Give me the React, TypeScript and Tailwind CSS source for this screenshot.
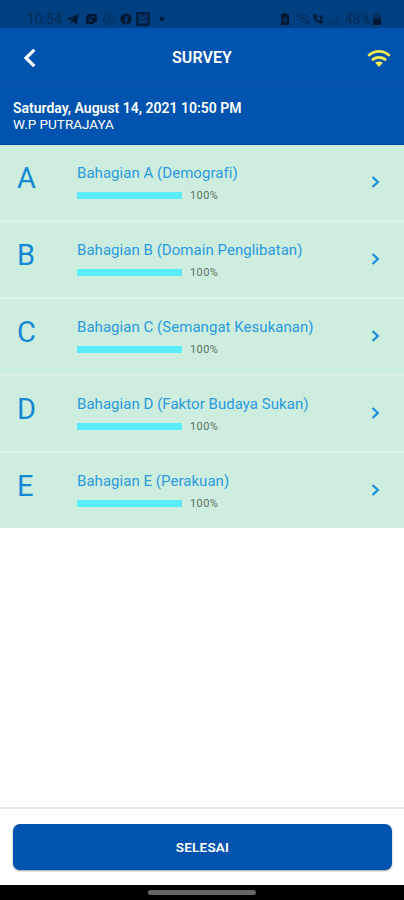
const sections = [
  { letter: 'A', title: 'Bahagian A (Demografi)', progress: 100 },
  { letter: 'B', title: 'Bahagian B (Domain Penglibatan)', progress: 100 },
  { letter: 'C', title: 'Bahagian C (Semangat Kesukanan)', progress: 100 },
  { letter: 'D', title: 'Bahagian D (Faktor Budaya Sukan)', progress: 100 },
  { letter: 'E', title: 'Bahagian E (Perakuan)', progress: 100 },
];

function StatusBar() {
  return (
    <div className="flex h-7 shrink-0 items-center bg-[#003f80] pt-[9px] pr-[23px] pl-[27px] text-[#062c58]">
      <span className="w-[39px] text-[14px] leading-4">10:54</span>
      {/* Notification icons */}
      <svg className="h-3 w-[13px] text-[#021733]" viewBox="0 0 13 12" fill="currentColor">
        <path d="M0.5 5.7 12.5 1 10.6 11.2 7.2 8.7 5.3 10.5 4.7 7.5 9.6 3.5 3.3 6.9Z" />
      </svg>
      <svg className="ml-[6px] h-3 w-3 text-[#021733]" viewBox="0 0 12 12" fill="currentColor">
        <path fillRule="evenodd" d="M2 1h10v8H9.500l-1 2H1V3h1V1Zm2 2.500v1h6v-1H4Zm-1 5h4V7L5.500 6 3 8.500Z" />
      </svg>
      <svg className="ml-[6px] h-3 w-3" viewBox="0 0 12 12" fill="none" stroke="currentColor">
        <circle cx="6" cy="6" r="5.2" />
        <path d="M7.800 4C6.800 3 4.500 3.200 4.500 4.700S7.700 5.700 7.700 7.300 5.200 9 4.200 7.800" />
      </svg>
      <svg className="ml-[5px] h-3 w-3 text-[#021733]" viewBox="0 0 12 12">
        <circle cx="6" cy="6" r="5.600" fill="currentColor" />
        <path d="M6.200 11.600V5.200c0-1.500.8-2 2.300-1.700M4.500 6.600h3.600" fill="none" stroke="#003f80" strokeWidth="1.400" />
      </svg>
      <svg className="ml-[4px] h-[14px] w-[14px] text-[#021733]" viewBox="0 0 14 14">
        <path d="M1 1h12v12H1Z" fill="#042a5a" stroke="currentColor" strokeWidth="1.400" />
        <path d="M4 11V8l3 2 3-2v3M4 2v3l3 1 3-2V2" fill="none" stroke="#003f80" strokeWidth="1.200" />
      </svg>
      <span className="ml-[10px] h-1 w-1 rounded-full bg-[#021733]" />

      {/* System icons */}
      <div className="ml-auto flex items-center">
        <svg className="h-3 w-2 text-[#021733]" viewBox="0 0 8 12">
          <path d="M2.500 0h3v1H8v11H0V1h2.500Z" fill="currentColor" />
          <path d="M2 7.500 4 4l2 3.500ZM4 9v1" fill="none" stroke="#003f80" strokeWidth="0.800" />
        </svg>
        <svg className="ml-[7px] h-3 w-[14px]" viewBox="0 0 14 12" fill="none" stroke="currentColor">
          <path d="M1 4c3.500-3.300 8-3.300 11.500 0M3 6.500c2.300-2 5-2 7.300 0M5 8.800c1.200-.9 2.300-.9 3.400 0M10.500 7v4M12.800 7v4" strokeWidth="1.300" />
        </svg>
        <svg className="ml-[2px] h-3 w-[13px] text-[#021733]" viewBox="0 0 14 12" fill="none" stroke="currentColor">
          <path d="M1.500 1.500c0 5 4 9 9.500 9L12 8 9.500 7 8 8.300C6 7.500 5 6.300 4.500 4.500L5.500 3 4 1Z" fill="currentColor" strokeWidth="0.600" />
          <path d="M12.500 1.500 9 5 7.500 3.500M9 2v3h3" strokeWidth="1.100" />
        </svg>
        <svg className="ml-[2px] h-3 w-3 opacity-50" viewBox="0 0 12 12" fill="currentColor">
          <path d="M0 9h1.500v3H0ZM3 7h1.500v5H3ZM6 5h1.500v7H6ZM9 3h1.500v9H9Z" />
        </svg>
        <span className="ml-[6px] text-[14px] leading-4">48%</span>
        <svg className="ml-[2px] h-3 w-2" viewBox="0 0 8 12">
          <path d="M2.500 0h3v1H8v11H0V1h2.500Z" fill="#043063" />
          <path d="M0 5.500h8V12H0Z" fill="#021733" />
        </svg>
      </div>
    </div>
  );
}

function Header() {
  return (
    <header className="grid h-[60px] shrink-0 grid-cols-[1fr_auto_1fr] items-center border-b border-[#0a4fa9] bg-[#0053ae] px-[13px] text-white">
      <svg className="ml-[10px] h-5 w-[14px]" viewBox="0 0 14 20" fill="none" stroke="currentColor" strokeWidth="3.200">
        <path d="M11.300 1.800 3 10l8.300 8.200" />
      </svg>
      <h1 className="text-[16px] leading-5 font-semibold tracking-[0.1px]">SURVEY</h1>
      <svg className="h-[18px] w-6 justify-self-end" viewBox="0 0 24 18" fill="none" stroke="#f5ec52" strokeWidth="2.700">
        <path d="M1.300 6.800c6.100-6 15.300-6 21.400 0M5 11.200c4-3.900 10-3.900 14 0" />
        <path d="M8.200 13.700c2.300-1.700 5.300-1.700 7.600 0L12 18Z" fill="#f5ec52" stroke="none" />
      </svg>
    </header>
  );
}

function SectionRow({ letter, title, progress }: { letter: string; title: string; progress: number }) {
  return (
    <li className="flex h-[77px] border-b-2 border-[#daf2e8] bg-[#cdedde] pr-[23px] pl-[17px] last:h-[75px] last:border-b-0">
      <span className="w-[60px] pt-[17px] text-[29px] leading-8 text-[#1689d6]">{letter}</span>
      <div className="flex-1 pt-[18px]">
        <p className="text-[15px] leading-5 tracking-[0.04px] whitespace-nowrap text-[#2b9ade]">{title}</p>
        <div className="mt-[5px] flex items-center">
          <div className="h-[7px] w-[105px]">
            <div className="h-full rounded-[1px] bg-[#5cebfa]" style={{ width: `${progress}%` }} />
          </div>
          <span className="ml-2 text-[11px] leading-[15px] tracking-[0.4px] text-[#5c7068]">{progress}%</span>
        </div>
      </div>
      <svg className="mt-[31px] h-3 w-[10px]" viewBox="0 0 10 12" fill="none" stroke="#1d8fdc" strokeWidth="2.300">
        <path d="M1.500 1l5.300 5-5.300 5" />
      </svg>
    </li>
  );
}

export default function App() {
  return (
    <div className="flex h-[900px] w-[404px] flex-col overflow-hidden bg-white font-['Roboto',sans-serif]">
      <StatusBar />
      <Header />
      <div className="h-[57px] shrink-0 border-b border-[#00439b] bg-[#0053ae] pt-[12px] pl-[13px] text-white">
        <p className="text-[14px] leading-4 font-semibold">Saturday, August 14, 2021 10:50 PM</p>
        <p className="text-[13.5px] leading-4">W.P PUTRAJAYA</p>
      </div>
      <ul>
        {sections.map((section) => (
          <SectionRow key={section.letter} {...section} />
        ))}
      </ul>
      <footer className="mt-auto h-[78px] shrink-0 border-t-2 border-[#e7e7e7] pt-[15px] pr-[12px] pl-[13px]">
        <button className="h-[46px] w-full rounded-[7px] bg-[#0053ae] text-[13.5px] font-semibold tracking-[0.2px] text-white shadow-[0_1px_2px_rgba(0,0,0,0.4)]">
          SELESAI
        </button>
      </footer>
      {/* Gesture bar */}
      <div className="flex h-[15px] shrink-0 justify-center bg-black pt-[5px]">
        <div className="h-[5px] w-[108px] rounded-full bg-[#666]" />
      </div>
    </div>
  );
}
